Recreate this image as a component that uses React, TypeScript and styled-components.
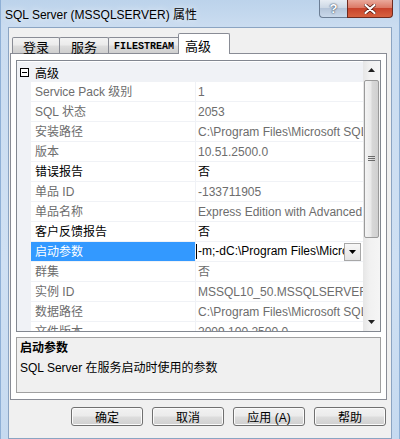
import React from "react";
import styled, { createGlobalStyle } from "styled-components";

const UI = `"Liberation Sans", "Noto Sans CJK SC", sans-serif`;

const Global = createGlobalStyle`
  html, body { margin: 0; padding: 0; background: #ffffff; }
  body { width: 400px; height: 439px; overflow: hidden; font-family: ${UI}; font-size: 12px; }
  * { box-sizing: border-box; }
`;

const Window = styled.div`
  width: 400px;
  height: 439px;
  display: flex;
  flex-direction: column;
  background: linear-gradient(180deg, #bcd3eb 0px, #cadcf0 26px, #cfe0f3 60%, #c6daf0 100%);
  border-left: 1px solid #8fb0d6;
  border-right: 1px solid #8fb0d6;
`;

const TitleBar = styled.div`
  height: 27px;
  flex-shrink: 0;
  display: flex;
  align-items: flex-start;
  padding: 0 6px 0 4px;
`;

const TitleText = styled.div`
  flex: 1;
  line-height: 30px;
  font-size: 12px;
  color: #000;
  white-space: nowrap;
  text-shadow: 0 0 6px rgba(255, 255, 255, 0.9);
`;

const CaptionGroup = styled.div`
  display: flex;
  height: 18px;
`;

const HelpButton = styled.div`
  width: 28px;
  height: 18px;
  border: 1px solid #6c7e95;
  border-top: none;
  border-right: none;
  border-radius: 0 0 0 4px;
  background: linear-gradient(180deg, #e6ecf3 0%, #cdd8e5 45%, #b5c5d9 50%, #c9d8ea 100%);
  display: flex;
  align-items: center;
  justify-content: center;
  color: #ffffff;
  font-weight: bold;
  font-size: 13px;
  font-family: "Liberation Sans", sans-serif;
  text-shadow: 0 0 1px #3a4a60, 0 0 2px #3a4a60;
`;

const CloseButton = styled.div`
  width: 46px;
  height: 18px;
  border: 1px solid #6f2a1e;
  border-top: none;
  border-radius: 0 0 4px 0;
  background: linear-gradient(180deg, #eaa99b 0%, #dc7a66 45%, #c8432b 50%, #d7613f 100%);
  display: flex;
  align-items: center;
  justify-content: center;
`;

const Client = styled.div`
  flex: 1;
  margin: 0 7px 0 7px;
  background: #f0f0f0;
  border: 1px solid #8ba4c2;
  display: flex;
  flex-direction: column;
`;

const TabStrip = styled.div`
  height: 25px;
  flex-shrink: 0;
  display: flex;
  align-items: flex-end;
  padding-left: 3px;
  position: relative;
  z-index: 1;
`;

const Tab = styled.div<{ $w: number; $active?: boolean; $mono?: boolean }>`
  width: ${(p) => p.$w}px;
  height: ${(p) => (p.$active ? 21 : 16)}px;
  margin-right: -1px;
  margin-left: ${(p) => (p.$active ? -1 : 0)}px;
  margin-bottom: ${(p) => (p.$active ? -1 : 0)}px;
  border: 1px solid #898c95;
  border-bottom: none;
  border-radius: 2px 2px 0 0;
  background: ${(p) =>
    p.$active
      ? "#ffffff"
      : "linear-gradient(180deg, #f3f3f3 0%, #ebebeb 48%, #dddddd 52%, #cfcfcf 100%)"};
  display: flex;
  align-items: ${(p) => (p.$active ? "flex-start" : "center")};
  padding-top: ${(p) => (p.$active ? 2 : 1)}px;
  justify-content: ${(p) => (p.$active ? "flex-start" : "center")};
  padding-left: ${(p) => (p.$active ? 6 : 0)}px;
  font-family: ${(p) => (p.$mono ? `"Liberation Mono", monospace` : UI)};
  font-size: ${(p) => (p.$mono ? 10 : 13)}px;
  font-weight: ${(p) => (p.$mono ? "bold" : "normal")};
  color: #000;
  position: relative;
  z-index: ${(p) => (p.$active ? 2 : 1)};
`;

const Panel = styled.div`
  margin-left: 1px;
  width: 377px;
  height: 347px;
  flex-shrink: 0;
  border: 1px solid #898c95;
  background: #ffffff;
  padding: 6px 5px 6px 5px;
  display: flex;
  flex-direction: column;
  gap: 5px;
`;

const Grid = styled.div`
  height: 272px;
  flex-shrink: 0;
  border: 1px solid #828790;
  display: flex;
  background: #ffffff;
`;

const Rows = styled.div`
  flex: 1;
  overflow: hidden;
  padding-top: 1px;
  display: flex;
  flex-direction: column;
`;

const LINE = "#f0f2f6";

const CategoryRow = styled.div`
  height: 20px;
  flex-shrink: 0;
  display: flex;
  align-items: center;
  background: ${LINE};
`;

const ToggleBox = styled.div`
  width: 14px;
  display: flex;
  align-items: center;
  justify-content: center;
  padding-left: 1px;
`;

const CategoryLabel = styled.div`
  padding-left: 4px;
  color: #000;
  font-size: 12px;
`;

const Row = styled.div`
  height: 20px;
  flex-shrink: 0;
  display: grid;
  grid-template-columns: 14px 165px 1fr;
  background: ${LINE};
`;

const Margin = styled.div`
  background: ${LINE};
`;

const Label = styled.div<{ $muted?: boolean; $selected?: boolean }>`
  border-right: 1px solid ${LINE};
  border-bottom: 1px solid ${LINE};
  background: ${(p) => (p.$selected ? "#3399ff" : "#ffffff")};
  color: ${(p) => (p.$selected ? "#ffffff" : p.$muted ? "#6d6d6d" : "#000000")};
  padding-left: 4px;
  line-height: 20px;
  white-space: nowrap;
  overflow: hidden;
`;

const Value = styled.div<{ $muted?: boolean }>`
  border-bottom: 1px solid ${LINE};
  background: #ffffff;
  color: ${(p) => (p.$muted ? "#6d6d6d" : "#000000")};
  padding-left: 2px;
  line-height: 20px;
  white-space: nowrap;
  overflow: hidden;
`;

const EditValue = styled.div`
  border-bottom: 1px solid ${LINE};
  background: #ffffff;
  display: flex;
  align-items: center;
  padding-right: 2px;
  min-width: 0;
`;

const EditText = styled.div`
  flex: 1;
  min-width: 0;
  white-space: nowrap;
  overflow: hidden;
  color: #000;
  line-height: 19px;
  display: flex;
  align-items: center;
`;

const Caret = styled.span`
  display: inline-block;
  width: 1px;
  height: 15px;
  background: #000;
  margin-right: 1px;
  flex-shrink: 0;
`;

const DropButton = styled.div`
  width: 17px;
  height: 18px;
  flex-shrink: 0;
  border: 1px solid #a7a7a7;
  background: linear-gradient(180deg, #f7f7f7, #e4e4e4);
  display: flex;
  align-items: center;
  justify-content: center;
`;

const ScrollBar = styled.div`
  width: 17px;
  flex-shrink: 0;
  display: flex;
  flex-direction: column;
  background: linear-gradient(90deg, #e6e6e6 0%, #f1f1f1 40%, #f5f5f5 100%);
`;

const ScrollArrow = styled.div`
  height: 18px;
  flex-shrink: 0;
  display: flex;
  align-items: center;
  justify-content: center;
`;

const Thumb = styled.div`
  height: 158px;
  margin: 1px 1px 0 1px;
  border: 1px solid #9a9a9a;
  border-radius: 2px;
  background: linear-gradient(90deg, #f4f4f4 0%, #e9e9e9 48%, #d8d8d8 52%, #d0d0d0 100%);
  display: flex;
  align-items: center;
  justify-content: center;
  flex-shrink: 0;
`;

const Spacer = styled.div`
  flex: 1;
`;

const Description = styled.div`
  height: 56px;
  flex-shrink: 0;
  border: 1px solid #a0a0a0;
  background: #f0f0f0;
  padding: 0 3px;
  line-height: 20px;
  color: #000;
`;

const DescTitle = styled.div`
  font-weight: bold;
`;

const ButtonRow = styled.div`
  display: flex;
  justify-content: flex-end;
  gap: 9px;
  padding: 7px 5px 0 0;
`;

const Button = styled.div`
  width: 72px;
  height: 19px;
  border: 1px solid #707070;
  border-radius: 3px;
  background: linear-gradient(180deg, #f2f2f2 0%, #ebebeb 48%, #dddddd 52%, #cfcfcf 100%);
  box-shadow: inset 0 0 0 1px #fbfbfb;
  display: flex;
  align-items: center;
  justify-content: center;
  color: #000;
  font-size: 12px;
`;

type Prop = { label: string; value: string; muted?: boolean };

const props: Prop[] = [
  { label: "Service Pack 级别", value: "1", muted: true },
  { label: "SQL 状态", value: "2053", muted: true },
  { label: "安装路径", value: "C:\\Program Files\\Microsoft SQL Server\\MSSQL10_50.MSSQLSERVER\\MSSQL", muted: true },
  { label: "版本", value: "10.51.2500.0", muted: true },
  { label: "错误报告", value: "否" },
  { label: "单品 ID", value: "-133711905", muted: true },
  { label: "单品名称", value: "Express Edition with Advanced Services", muted: true },
  { label: "客户反馈报告", value: "否" },
];

const propsAfter: Prop[] = [
  { label: "群集", value: "否", muted: true },
  { label: "实例 ID", value: "MSSQL10_50.MSSQLSERVER", muted: true },
  { label: "数据路径", value: "C:\\Program Files\\Microsoft SQL Server\\MSSQL10_50.MSSQLSERVER\\MSSQL\\DATA", muted: true },
  { label: "文件版本", value: "2009.100.2500.0", muted: true },
];

const PropRow = ({ p }: { p: Prop }) => (
  <Row>
    <Margin />
    <Label $muted={p.muted}>{p.label}</Label>
    <Value $muted={p.muted}>{p.value}</Value>
  </Row>
);

const Triangle = ({ up }: { up?: boolean }) => (
  <svg width="7" height="4" viewBox="0 0 7 4">
    {up ? <path d="M0 4 L3.5 0 L7 4 Z" fill="#222" /> : <path d="M0 0 L7 0 L3.5 4 Z" fill="#222" />}
  </svg>
);

export default function App() {
  return (
    <>
      <Global />
      <Window>
        <TitleBar>
          <TitleText>SQL Server (MSSQLSERVER) 属性</TitleText>
          <CaptionGroup>
            <HelpButton>?</HelpButton>
            <CloseButton>
              <svg width="12" height="10" viewBox="0 0 12 10">
                <path d="M1.5 1 L10.5 9 M10.5 1 L1.5 9" stroke="#5a1a10" strokeWidth="3.6" strokeLinecap="round" />
                <path d="M1.5 1 L10.5 9 M10.5 1 L1.5 9" stroke="#ffffff" strokeWidth="2.2" strokeLinecap="round" />
              </svg>
            </CloseButton>
          </CaptionGroup>
        </TitleBar>
        <Client>
          <TabStrip>
            <Tab $w={48}>登录</Tab>
            <Tab $w={50}>服务</Tab>
            <Tab $w={72} $mono>FILESTREAM</Tab>
            <Tab $w={52} $active>高级</Tab>
          </TabStrip>
          <Panel>
            <Grid>
              <Rows>
                <CategoryRow>
                  <ToggleBox>
                    <svg width="9" height="9" viewBox="0 0 9 9">
                      <rect x="0.5" y="0.5" width="8" height="8" fill="#ffffff" stroke="#000" strokeWidth="1" />
                      <path d="M2 4.5 H7" stroke="#000" strokeWidth="1" />
                    </svg>
                  </ToggleBox>
                  <CategoryLabel>高级</CategoryLabel>
                </CategoryRow>
                {props.map((p) => (
                  <PropRow key={p.label} p={p} />
                ))}
                <Row>
                  <Margin />
                  <Label $selected>启动参数</Label>
                  <EditValue>
                    <EditText>
                      <Caret />
                      -m;-dC:\Program Files\Microsoft SQL Server\MSSQL10_50.MSSQLSERVER\MSSQL\DATA\master.mdf
                    </EditText>
                    <DropButton>
                      <svg width="7" height="4" viewBox="0 0 7 4">
                        <path d="M0 0 L7 0 L3.5 4 Z" fill="#000" />
                      </svg>
                    </DropButton>
                  </EditValue>
                </Row>
                {propsAfter.map((p) => (
                  <PropRow key={p.label} p={p} />
                ))}
              </Rows>
              <ScrollBar>
                <ScrollArrow>
                  <Triangle up />
                </ScrollArrow>
                <Thumb>
                  <svg width="7" height="6" viewBox="0 0 7 6">
                    <path d="M0 0.5 H7 M0 2.5 H7 M0 4.5 H7" stroke="#6b6b6b" strokeWidth="1" />
                  </svg>
                </Thumb>
                <Spacer />
                <ScrollArrow>
                  <Triangle />
                </ScrollArrow>
              </ScrollBar>
            </Grid>
            <Description>
              <DescTitle>启动参数</DescTitle>
              <div>SQL Server 在服务启动时使用的参数</div>
            </Description>
          </Panel>
          <ButtonRow>
            <Button>确定</Button>
            <Button>取消</Button>
            <Button>应用 (A)</Button>
            <Button>帮助</Button>
          </ButtonRow>
        </Client>
      </Window>
    </>
  );
}
